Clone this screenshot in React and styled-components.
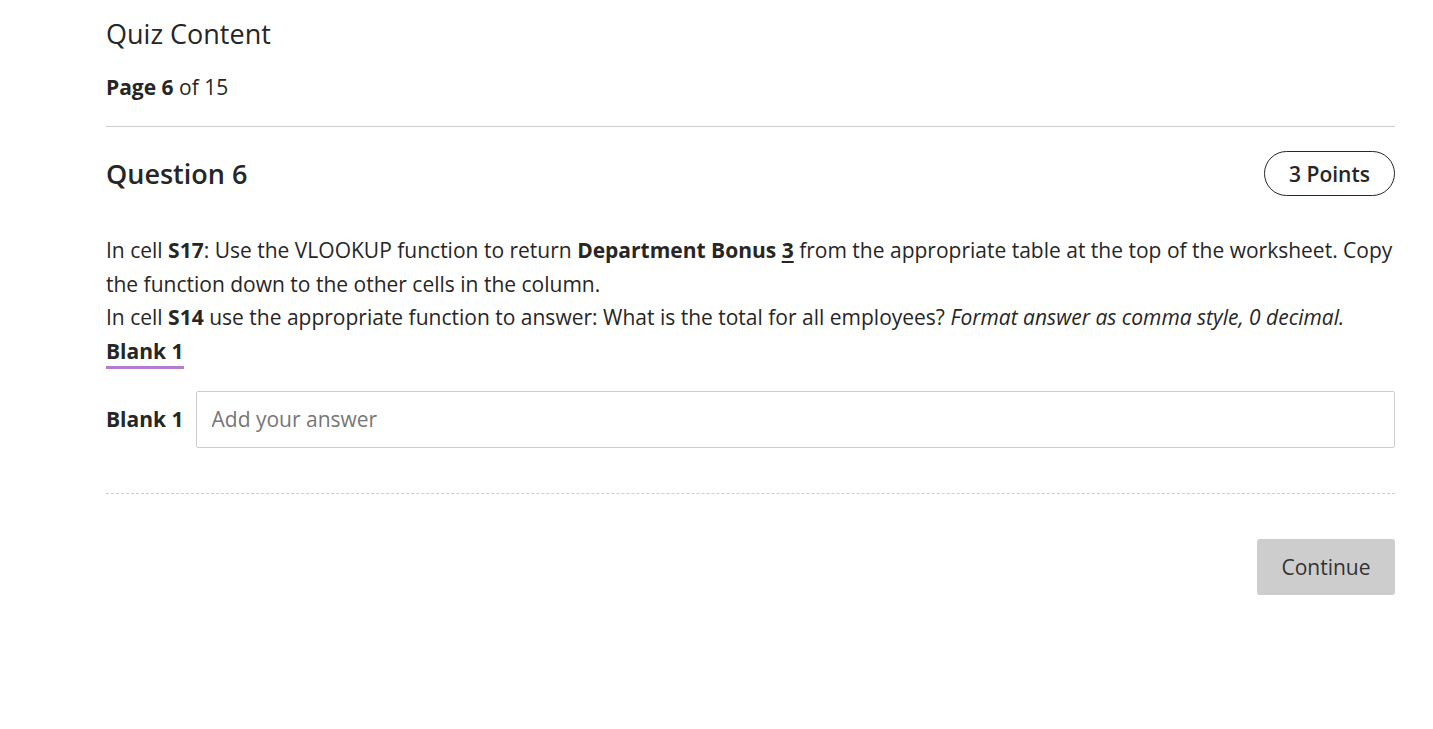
import React from "react";
import styled, { createGlobalStyle } from "styled-components";

const Global = createGlobalStyle`
  html, body { margin: 0; padding: 0; background: #fff; }
  body { font-family: "Open Sans", "Liberation Sans", sans-serif; color: #262626; }
  * { box-sizing: border-box; }
`;

const Page = styled.main`
  width: 1289px;
  margin-left: 106px;
  padding-top: 14px;
`;

const Title = styled.h1`
  margin: 0;
  font-size: 27px;
  font-weight: 400;
  line-height: 40px;
  color: #262626;
`;

const PageInfo = styled.div`
  margin-top: 18px;
  font-size: 21px;
  line-height: 30px;
  color: #262626;
  padding-bottom: 24px;
  border-bottom: 1px solid #cdcdcd;
  b { font-weight: 700; }
`;

const QuestionHeader = styled.div`
  display: flex;
  align-items: center;
  justify-content: space-between;
  margin-top: 24px;
`;

const QuestionTitle = styled.h2`
  margin: 0;
  font-size: 27px;
  font-weight: 600;
  line-height: 40px;
  color: #262626;
`;

const Pill = styled.div`
  height: 45px;
  padding: 0 24px;
  border: 1px solid #262626;
  border-radius: 23px;
  display: flex;
  align-items: center;
  font-size: 21px;
  font-weight: 600;
  color: #262626;
`;

const Body = styled.div`
  margin-top: 38px;
  font-size: 21px;
  line-height: 33.5px;
  color: #262626;
  b { font-weight: 700; }
  p { margin: 0; }
`;

const Under = styled.b`
  text-decoration: underline;
  text-underline-offset: 3px;
`;

const BlankRef = styled.span`
  display: inline-block;
  font-weight: 700;
  line-height: 30px;
  border-bottom: 3px solid #b57bd0;
`;

const AnswerRow = styled.div`
  display: flex;
  align-items: center;
  gap: 12px;
  margin-top: 22px;
`;

const Label = styled.label`
  font-size: 21px;
  font-weight: 700;
  color: #262626;
`;

const Input = styled.input`
  flex: 1;
  height: 57px;
  border: 1px solid #cdcdcd;
  border-radius: 2px;
  padding: 0 15px;
  font-family: "Open Sans", "Liberation Sans", sans-serif;
  font-size: 21px;
  color: #262626;
  outline: none;
  &::placeholder { color: #767676; }
`;

const Divider = styled.hr`
  margin: 45px 0 0;
  border: 0;
  border-top: 1px dashed #cdcdcd;
`;

const Footer = styled.div`
  display: flex;
  justify-content: flex-end;
  margin-top: 45px;
`;

const Button = styled.button`
  width: 138px;
  height: 56px;
  background: #cdcdcd;
  border: 0;
  border-radius: 3px;
  font-family: "Open Sans", "Liberation Sans", sans-serif;
  font-size: 21px;
  color: #333;
`;

export default function App() {
  return (
    <>
      <Global />
      <Page>
        <Title>Quiz Content</Title>
        <PageInfo><b>Page 6</b> of 15</PageInfo>
        <QuestionHeader>
          <QuestionTitle>Question 6</QuestionTitle>
          <Pill>3 Points</Pill>
        </QuestionHeader>
        <Body>
          <p>
            In cell <b>S17</b>: Use the VLOOKUP function to return <b>Department Bonus <Under>3</Under></b> from the appropriate table at the top of the worksheet. Copy the function down to the other cells in the column.
          </p>
          <p>
            In cell <b>S14</b> use the appropriate function to answer: What is the total for all employees? <i>Format answer as comma style, 0 decimal.</i>
          </p>
          <p><BlankRef>Blank 1</BlankRef></p>
        </Body>
        <AnswerRow>
          <Label htmlFor="blank1">Blank 1</Label>
          <Input id="blank1" placeholder="Add your answer" />
        </AnswerRow>
        <Divider />
        <Footer>
          <Button>Continue</Button>
        </Footer>
      </Page>
    </>
  );
}
